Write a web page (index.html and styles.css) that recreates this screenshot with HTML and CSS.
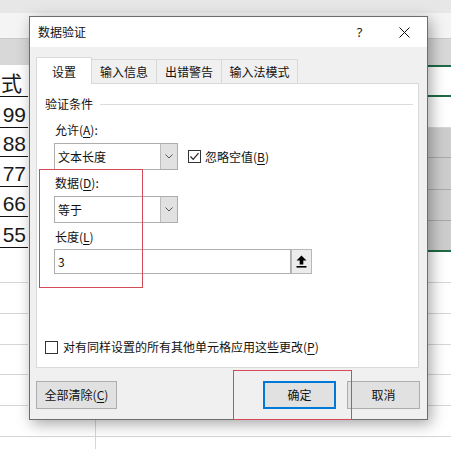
FILE: index.html
```
<!DOCTYPE html>
<html lang="zh-CN">
<head>
<meta charset="utf-8">
<title>数据验证</title>
<link rel="stylesheet" href="styles.css">
</head>
<body>
<div class="sheet">
  <div class="band band-top"></div>
  <div class="band band-formula"></div>
  <div class="band band-header"></div>
  <div class="grid">
    <div class="col col-left">
      <div class="cell num cjk">式</div>
      <div class="cell num">99</div>
      <div class="cell num">88</div>
      <div class="cell num">77</div>
      <div class="cell num">66</div>
      <div class="cell num">55</div>
      <div class="cell blank"></div>
      <div class="cell blank"></div>
      <div class="cell blank"></div>
      <div class="cell blank"></div>
      <div class="cell blank"></div>
      <div class="cell blank"></div>
      <div class="cell"></div>
    </div>
    <div class="col col-mid">
      <div class="mid-col mid-narrow"><div class="mid-cell"></div></div>
      <div class="mid-col mid-wide"><div class="mid-cell"></div></div>
    </div>
    <div class="col col-right">
      <div class="cell sel-top"></div>
      <div class="cell blank"></div>
      <div class="cell shade"></div>
      <div class="cell shade"></div>
      <div class="cell shade"></div>
      <div class="cell shade sel-bottom"></div>
      <div class="cell blank"></div>
      <div class="cell blank"></div>
      <div class="cell blank"></div>
      <div class="cell blank"></div>
      <div class="cell blank"></div>
      <div class="cell blank"></div>
      <div class="cell"></div>
    </div>
  </div>
</div>

<div class="dialog">
  <div class="titlebar">
    <div class="title">数据验证</div>
    <div class="tb-btn help">?</div>
    <div class="tb-btn close">
      <svg width="11" height="11" viewBox="0 0 11 11"><path d="M0.5 0.5 L10.5 10.5 M10.5 0.5 L0.5 10.5" stroke="#111" stroke-width="1"/></svg>
    </div>
  </div>
  <div class="body">
    <div class="tabs">
      <div class="tab active t1">设置</div>
      <div class="tab t2">输入信息</div>
      <div class="tab t3">出错警告</div>
      <div class="tab t4">输入法模式</div>
    </div>
    <div class="panel">
      <div class="legend"><span>验证条件</span><span class="rule"></span></div>
      <div class="label first">允许(<u>A</u>):</div>
      <div class="combo-row">
        <div class="combo"><span class="combo-text">文本长度</span><span class="drop"><svg width="8" height="5" viewBox="0 0 8 5"><path d="M0.5 0.5 L4 4 L7.5 0.5" fill="none" stroke="#555" stroke-width="1"/></svg></span></div>
        <div class="check checked"><svg width="11" height="11" viewBox="0 0 11 11"><path d="M1.5 5.5 L4.2 8.3 L9.5 2.2" fill="none" stroke="#222" stroke-width="1.2"/></svg></div>
        <span class="check-label">忽略空值(<u>B</u>)</span>
      </div>
      <div class="label">数据(<u>D</u>):</div>
      <div class="combo-row">
        <div class="combo"><span class="combo-text">等于</span><span class="drop"><svg width="8" height="5" viewBox="0 0 8 5"><path d="M0.5 0.5 L4 4 L7.5 0.5" fill="none" stroke="#555" stroke-width="1"/></svg></span></div>
      </div>
      <div class="label third">长度(<u>L</u>)</div>
      <div class="input-row">
        <div class="input">3</div>
        <div class="ref-btn"><svg width="11" height="13" viewBox="0 0 11 13"><path d="M5.5 0.5 L10.5 5.5 L7.3 5.5 L7.3 9.5 L3.7 9.5 L3.7 5.5 L0.5 5.5 Z" fill="#000"/><rect x="0.5" y="11" width="10" height="1.6" fill="#000"/></svg></div>
      </div>
      <div class="apply-row">
        <div class="check"></div>
        <span class="check-label">对有同样设置的所有其他单元格应用这些更改(<u>P</u>)</span>
      </div>
    </div>
    <div class="buttons">
      <div class="btn clear">全部清除(<u>C</u>)</div>
      <div class="spacer"></div>
      <div class="btn ok">确定</div>
      <div class="btn cancel">取消</div>
    </div>
  </div>
</div>

<div class="mark mark-fields"></div>
<div class="mark mark-ok"></div>
</body>
</html>
```

FILE: styles.css
```
html, body {
  margin: 0;
  padding: 0;
}
body {
  width: 451px;
  height: 449px;
  overflow: hidden;
  position: relative;
  background: #ffffff;
  font-family: "Noto Sans CJK SC", "Noto Sans", sans-serif;
}

/* ---------- spreadsheet background ---------- */
.sheet {
  display: flex;
  flex-direction: column;
  height: 449px;
}
.band-top {
  height: 13px;
  background: #e7e7e7;
}
.band-formula {
  height: 25px;
  background: #f4f4f4;
}
.band-header {
  height: 27px;
  box-sizing: border-box;
  background: #d8d8d8;
  border-top: 1px solid #cacaca;
}
.grid {
  flex: 1;
  display: flex;
}
.col {
  display: grid;
}
.col-left {
  width: 28px;
  overflow: hidden;
  grid-template-rows: 32px 31px 29px 30px 30px 31px 35px 31px 31px 30px 31px 31px 1fr;
}
.col-right {
  width: 23px;
  grid-template-rows: 32px 31px 30px 32px 31px 31px 31px 31px 31px 30px 31px 31px 1fr;
}
.col-mid {
  flex: 1;
  display: flex;
}
.cell {
  box-sizing: border-box;
}
.cell.blank {
  border-bottom: 1px solid #d6d6d6;
}
.cell.num {
  border-bottom: 1px solid #111;
  display: flex;
  align-items: flex-end;
  justify-content: flex-end;
  padding-right: 2px;
  font: 21px/24px "Liberation Sans", Arial, sans-serif;
  color: #1a1a1a;
  white-space: nowrap;
}
.cell.num.cjk {
  font-family: "Noto Sans CJK SC", sans-serif;
  padding-right: 6px;
  line-height: 28px;
}
.sel-top {
  border-top: 2px solid #1f6b45;
  border-bottom: 2px solid #1f6b45;
}
.shade {
  background: #cdcdcd;
  border-bottom: 1px solid #a9a9a9;
}
.shade.sel-bottom {
  border-bottom: 2px solid #1f6b45;
}
.mid-col {
  box-sizing: border-box;
}
.mid-narrow {
  width: 68px;
  border-right: 1px solid #d6d6d6;
}
.mid-wide {
  flex: 1;
}
.mid-cell {
  height: 372px;
  box-sizing: border-box;
  border-bottom: 1px solid #d6d6d6;
}

/* ---------- dialog ---------- */
.dialog {
  position: absolute;
  left: 29px;
  top: 16px;
  width: 399px;
  height: 404px;
  box-sizing: border-box;
  border: 1px solid #6d6d6d;
  background: #f0f0f0;
  box-shadow: 3px 4px 14px rgba(0, 0, 0, 0.35);
  display: flex;
  flex-direction: column;
  font-size: 12px;
  line-height: 16px;
  color: #111;
}
.titlebar {
  height: 30px;
  background: #ffffff;
  display: flex;
  align-items: center;
  padding-left: 8px;
}
.title {
  flex: 1;
}
.tb-btn {
  width: 45px;
  height: 30px;
  display: flex;
  align-items: center;
  justify-content: center;
}
.help {
  font: 13px "Noto Sans", sans-serif;
  color: #222;
}
.body {
  flex: 1;
  display: flex;
  flex-direction: column;
  padding: 10px 7px 10px 6px;
}
.tabs {
  display: flex;
  align-items: flex-end;
  height: 27px;
  position: relative;
  z-index: 1;
  margin-bottom: -1px;
}
.tab {
  box-sizing: border-box;
  height: 25px;
  border: 1px solid #d9d9d9;
  background: #f0f0f0;
  display: flex;
  align-items: center;
  justify-content: center;
  margin-left: -1px;
}
.tab.active {
  height: 27px;
  margin-left: 0;
  background: #ffffff;
  border-bottom: none;
  padding-top: 2px;
}
.t1 { width: 56px; }
.t2 { width: 66px; }
.t3 { width: 66px; }
.t4 { width: 77px; }

.panel {
  width: 383px;
  height: 285px;
  box-sizing: border-box;
  background: #ffffff;
  border: 1px solid #d9d9d9;
  display: flex;
  flex-direction: column;
  padding-top: 12px;
}
.legend {
  display: flex;
  align-items: center;
  padding-left: 8px;
  height: 16px;
}
.rule {
  flex: 1;
  margin-left: 7px;
  margin-right: 5px;
  border-top: 1px solid #dcdcdc;
}
.label {
  margin-left: 18px;
  margin-top: 5px;
  height: 16px;
}
.label.first {
  margin-top: 10px;
}
.label.third {
  margin-top: 6px;
}
u {
  text-underline-offset: 2px;
}
.combo-row {
  display: flex;
  align-items: center;
  margin-left: 17px;
  margin-top: 5px;
  height: 27px;
}
.combo {
  width: 124px;
  height: 27px;
  box-sizing: border-box;
  border: 1px solid #adadad;
  background: #fff;
  display: flex;
}
.combo-text {
  flex: 1;
  padding-left: 3px;
  display: flex;
  align-items: center;
}
.drop {
  width: 16px;
  background: #e1e1e1;
  border-left: 1px solid #bdbdbd;
  display: flex;
  align-items: center;
  justify-content: center;
}
.check {
  width: 13px;
  height: 13px;
  box-sizing: border-box;
  border: 1px solid #333;
  background: #fff;
  display: flex;
  align-items: center;
  justify-content: center;
}
.combo-row .check {
  margin-left: 10px;
}
.check-label {
  margin-left: 4px;
}
.input-row {
  display: flex;
  margin-left: 17px;
  margin-top: 4px;
  height: 25px;
}
.input {
  width: 237px;
  box-sizing: border-box;
  border: 1px solid #adadad;
  padding-left: 3px;
  display: flex;
  align-items: center;
}
.ref-btn {
  width: 21px;
  box-sizing: border-box;
  border: 1px solid #b8b8b8;
  background: #ececec;
  display: flex;
  align-items: center;
  justify-content: center;
}
.apply-row {
  margin-top: auto;
  margin-bottom: 12px;
  margin-left: 8px;
  display: flex;
  align-items: center;
  height: 16px;
}
.apply-row .check-label {
  margin-left: 5px;
}
.buttons {
  display: flex;
  margin-top: 13px;
  height: 28px;
}
.btn {
  box-sizing: border-box;
  height: 28px;
  background: #e1e1e1;
  border: 1px solid #adadad;
  display: flex;
  align-items: center;
  justify-content: center;
}
.btn.clear { width: 81px; }
.btn.ok {
  width: 73px;
  border: 2px solid #0078d7;
}
.btn.cancel {
  width: 73px;
  margin-left: 11px;
}
.spacer { flex: 1; }

/* ---------- red annotation boxes ---------- */
.mark {
  position: absolute;
  box-sizing: border-box;
  border: 1px solid #d24b56;
}
.mark-fields {
  left: 39px;
  top: 169px;
  width: 104px;
  height: 119px;
}
.mark-ok {
  left: 233px;
  top: 370px;
  width: 119px;
  height: 50px;
}
```
